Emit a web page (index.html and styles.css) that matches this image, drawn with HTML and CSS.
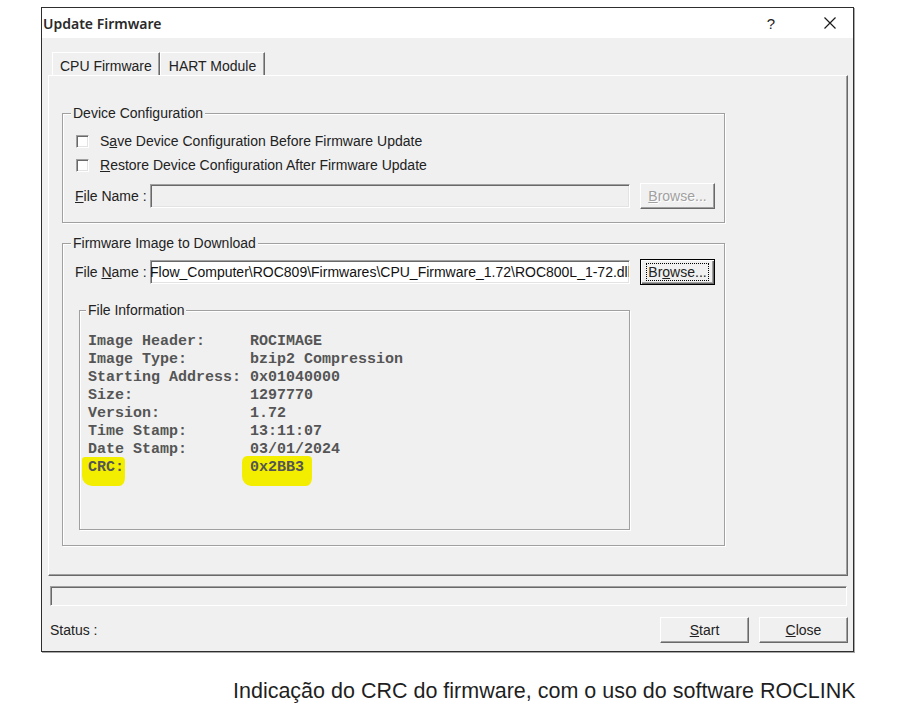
FILE: index.html
```html
<!DOCTYPE html>
<html lang="en">
<head>
<meta charset="utf-8">
<title>Update Firmware</title>
<link rel="stylesheet" href="styles.css">
</head>
<body>
<div class="dialog">
  <div class="titlebar">
    <span class="title">Update Firmware</span>
    <span class="caption-btn help">?</span>
    <span class="caption-btn close">
      <svg width="12" height="12" viewBox="0 0 12 12"><path d="M0.5 0.5 L11.5 11.5 M11.5 0.5 L0.5 11.5" stroke="#1a1a1a" stroke-width="1.2" fill="none"/></svg>
    </span>
  </div>

  <div class="client">
    <div class="tabs">
      <div class="tab active">CPU Firmware</div>
      <div class="tab">HART Module</div>
    </div>

    <div class="panel">
      <fieldset class="group device">
        <legend>Device Configuration</legend>
        <div class="group-body device-body">
          <label class="check"><span class="box"></span><span>S<u>a</u>ve Device Configuration Before Firmware Update</span></label>
          <label class="check"><span class="box"></span><span><u>R</u>estore Device Configuration After Firmware Update</span></label>
          <div class="file-row spaced">
            <span class="file-label"><u>F</u>ile Name :</span>
            <div class="field disabled"></div>
            <button class="btn disabled"><u>B</u>rowse...</button>
          </div>
        </div>
      </fieldset>

      <fieldset class="group firmware">
        <legend>Firmware Image to Download</legend>
        <div class="group-body firmware-body">
          <div class="file-row">
            <span class="file-label">File <u>N</u>ame :</span>
            <div class="field"><span class="path">Flow_Computer\ROC809\Firmwares\CPU_Firmware_1.72\ROC800L_1-72.dll</span></div>
            <button class="btn default"><span class="focus-ring">Br<u>o</u>wse...</span></button>
          </div>

          <fieldset class="group info">
            <legend>File Information</legend>
            <div class="info-body">
<pre class="info-text">Image Header:     ROCIMAGE
Image Type:       bzip2 Compression
Starting Address: 0x01040000
Size:             1297770
Version:          1.72
Time Stamp:       13:11:07
Date Stamp:       03/01/2024
<span class="hl hl-key">CRC:</span>              <span class="hl hl-val">0x2BB3</span></pre>
            </div>
          </fieldset>
        </div>
      </fieldset>
    </div>

    <div class="progress"></div>

    <div class="status-row">
      <span>Status :</span>
      <div class="actions">
        <button class="btn"><u>S</u>tart</button>
        <button class="btn"><u>C</u>lose</button>
      </div>
    </div>
  </div>
</div>

<p class="caption">Indicação do CRC do firmware, com o uso do software ROCLINK</p>
</body>
</html>
```

FILE: styles.css
```css
* {
  box-sizing: border-box;
}

body {
  margin: 0;
  background: #fff;
  font-family: "Liberation Sans", Arial, sans-serif;
}

/* dialog window */
.dialog {
  width: 813px;
  height: 645px;
  margin: 7px 0 0 41px;
  border: 1px solid #2e2e2e;
  box-shadow: 1px 1px 0 #a8a8a8;
  background: #f0f0f0;
  display: flex;
  flex-direction: column;
  font-size: 14px;
  color: #222;
}

.titlebar {
  height: 30px;
  flex: none;
  background: #fff;
  display: flex;
  align-items: center;
}

.title {
  padding-left: 1px;
  font-family: "Noto Sans", sans-serif;
  font-size: 14px;
  font-weight: 600;
  color: #2a2a2a;
}

.caption-btn {
  width: 46px;
  height: 30px;
  display: flex;
  align-items: center;
  justify-content: center;
}

.help {
  margin-left: auto;
  margin-right: 13px;
  font-size: 15px;
  color: #222;
}

.client {
  flex: 1;
  display: flex;
  flex-direction: column;
  padding: 12px 5px 8px 6px;
}

/* tab strip */
.tabs {
  height: 25px;
  flex: none;
  display: flex;
  align-items: flex-end;
}

.tab {
  height: 23px;
  padding: 5px 7px 0;
  line-height: 16px;
  border-top: 1px solid #fff;
  border-left: 1px solid #fff;
  border-right: 1px solid #696969;
  box-shadow: inset -1px 0 0 #a0a0a0;
}

.tab.active {
  margin-left: 4px;
}

.tab + .tab {
  padding: 5px 8px 0;
}

.panel {
  height: 501px;
  flex: none;
  border-top: 1px solid #fff;
  border-left: 1px solid #fff;
  border-right: 1px solid #696969;
  border-bottom: 1px solid #696969;
  box-shadow: inset -1px -1px 0 #a0a0a0;
  padding: 29px 0 0 13px;
}

/* etched group boxes */
.group {
  margin: 0;
  padding: 0;
  min-width: 0;
  width: 663px;
  border: 1px solid #a0a0a0;
  box-shadow: inset 1px 1px 0 #fff, 1px 1px 0 #fff;
}

.group legend {
  margin-left: 8px;
  padding: 0 2px;
  line-height: 16px;
  background: #f0f0f0;
}

.group-body {
  padding-left: 12px;
}

.device-body {
  padding-top: 8px;
  padding-bottom: 13px;
}

.firmware {
  margin-top: 12px;
}

.firmware-body {
  padding-top: 8px;
  padding-bottom: 15px;
}

.check {
  display: flex;
  align-items: center;
  height: 24px;
  margin-left: 1px;
}

.box {
  width: 13px;
  height: 13px;
  margin-right: 11px;
  background: #fff;
  border: 1px solid;
  border-color: #a0a0a0 #fff #fff #a0a0a0;
  box-shadow: inset 1px 1px 0 #696969, inset -1px -1px 0 #e3e3e3;
}

.file-row {
  display: flex;
  align-items: center;
  height: 26px;
}

.file-row.spaced {
  margin-top: 6px;
}

.file-label {
  width: 75px;
  flex: none;
}

.field {
  width: 480px;
  height: 24px;
  flex: none;
  border: 1px solid;
  border-color: #a0a0a0 #fff #fff #a0a0a0;
  box-shadow: inset 1px 1px 0 #696969, inset -1px -1px 0 #e3e3e3;
  background: #fff;
  overflow: hidden;
  white-space: nowrap;
  line-height: 22px;
}

.field.disabled {
  background: #f0f0f0;
}

.path {
  margin-left: -1px;
  color: #111;
}

/* push buttons */
.btn {
  font: inherit;
  color: inherit;
  background: #f0f0f0;
  width: 75px;
  height: 26px;
  margin-left: 10px;
  padding: 0;
  border: 1px solid;
  border-color: #fff #696969 #696969 #fff;
  box-shadow: inset -1px -1px 0 #a0a0a0;
  flex: none;
}

.btn.disabled {
  color: #a0a0a0;
  text-shadow: 1px 1px 0 #fff;
}

.btn.default {
  border-color: #000;
  box-shadow: inset 1px 1px 0 #fff, inset -1px -1px 0 #696969, inset -2px -2px 0 #a0a0a0;
}

.focus-ring {
  border: 1px dotted #000;
  padding: 0 1px;
}

/* file information box */
.info {
  width: 551px;
  margin: 17px 0 0 4px;
}

.info legend {
  margin-left: 6px;
}

.info-body {
  padding: 15px 0 52px 8px;
}

.info-text {
  margin: 0;
  font-family: "Liberation Mono", "Courier New", monospace;
  font-size: 15px;
  font-weight: bold;
  line-height: 18px;
  color: #555;
}

.hl {
  background: #f3ed00;
}

.hl-key {
  padding: 2px 1px 10px 6px;
  margin: 0 -1px 0 -6px;
  border-radius: 3px 4px 6px 10px / 3px 4px 8px 10px;
}

.hl-val {
  padding: 3px 8px 10px;
  margin: 0 -8px;
  border-radius: 5px 4px 6px 9px / 6px 4px 8px 10px;
}

/* bottom area */
.progress {
  height: 20px;
  flex: none;
  margin: 10px 1px 0 2px;
  border: 1px solid;
  border-color: #a0a0a0 #fff #fff #a0a0a0;
  box-shadow: inset 1px 1px 0 #696969;
}

.status-row {
  display: flex;
  align-items: center;
  height: 26px;
  flex: none;
  margin-top: 11px;
  padding-left: 2px;
}

.actions {
  margin-left: auto;
  display: flex;
  gap: 10px;
}

.actions .btn {
  width: 89px;
  margin-left: 0;
}

.caption {
  margin: 26px 0 0 233px;
  font-size: 21.5px;
  line-height: 26px;
  color: #1f1f1f;
}
```
